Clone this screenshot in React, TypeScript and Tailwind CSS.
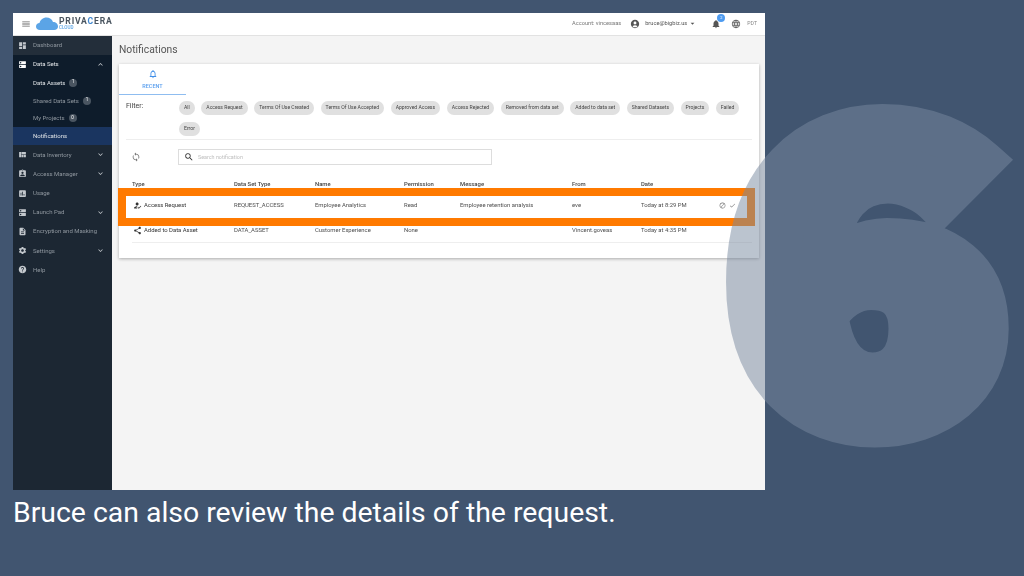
import React from "react";
import {
  MdAccountCircle, MdArrowDropDown, MdAssessment, MdAssignmentInd, MdBlock, MdCheck, MdDashboard, MdDescription, MdDns,
  MdExpandLess, MdExpandMore, MdHelp, MdHowToReg, MdLanguage, MdMenu, MdNotifications, MdNotificationsNone, MdSearch,
  MdSettings, MdShare, MdSync, MdViewQuilt,
} from "react-icons/md";

const chips = ["All", "Access Request", "Terms Of Use Created", "Terms Of Use Accepted", "Approved Access", "Access Rejected", "Removed from data set", "Added to data set", "Shared Datasets", "Projects", "Failed", "Error"];

function NavRow({ icon: Icon, label, chevron, dim = true, bg = "" }: { icon: any; label: string; chevron?: "up" | "down"; dim?: boolean; bg?: string }) {
  return (
    <div className={`flex h-[19.2px] items-center pl-[5px] pr-[7px] ${bg}`}>
      <Icon className={`w-[9px] h-[9px] ${dim ? "text-[#c3c8cd]" : "text-white"}`} />
      <span className={`ml-[6px] flex-1 pb-[1px] text-[6px] ${dim ? "text-[#8f979f]" : "text-[#e4e7ea]"}`}>{label}</span>
      {chevron === "up" && <MdExpandLess className="w-[9px] h-[9px] text-[#c3c8cd]" />}
      {chevron === "down" && <MdExpandMore className="w-[9px] h-[9px] text-[#c3c8cd]" />}
    </div>
  );
}

function SubRow({ label, count, active, bright }: { label: string; count?: string; active?: boolean; bright?: boolean }) {
  return (
    <div className={`flex h-[17.8px] items-center pl-[20px] ${active ? "bg-[#1a3560]" : ""}`}>
      <span className={`pb-[1px] text-[6px] ${bright ? "text-[#dfe3e7]" : "text-[#8f979f]"}`}>{label}</span>
      {count && <span className="ml-[4px] flex h-[8px] w-[8px] items-center justify-center rounded-full bg-[#4a5561] text-[4.5px] text-white">{count}</span>}
    </div>
  );
}

function Row({ icon, type, dst, name, perm, msg, from, date, actions, h }: any) {
  return (
    <div className={`grid grid-cols-[102px_81px_89px_56px_112px_69px_77px_1fr] items-center border-b border-[#eeeeee] text-[5.9px] text-[#4d4d4d] ${h}`}>
      <div className="flex items-center pl-[1px] text-[#333333]">
        {icon}
        <span className="ml-[2px]">{type}</span>
      </div>
      <span>{dst}</span>
      <span>{name}</span>
      <span>{perm}</span>
      <span>{msg}</span>
      <span>{from}</span>
      <span>{date}</span>
      <span className="flex items-center gap-[3px] pl-[1px] text-[#777777]">{actions}</span>
    </div>
  );
}

export default function App() {
  return (
    <div className="relative h-[576px] w-[1024px] overflow-hidden bg-[#415570] pl-[13px] pt-[13px] font-['Roboto',sans-serif]">
      <div className="flex h-[477px] w-[752px] flex-col overflow-hidden bg-[#f4f4f4] blur-[0.4px]">
        <header className="flex h-[22.5px] shrink-0 items-center border-b border-[#e2e2e2] bg-white">
          <MdMenu className="ml-[8px] h-[10px] w-[10px] text-[#666666]" />
          <svg viewBox="0 0 44 26" className="ml-[5px] h-[13px] w-[22px]">
            <path d="M8 26C3 26 0 23 0 19c0-4 3-7 7-7 1-6 7-11 14-11 6 0 11 3 13 9 6 0 10 4 10 9 0 4-3 7-8 7Z" fill="#5ba4e6" />
          </svg>
          <div className="ml-[1px] flex flex-col leading-none">
            <span className="text-[8.6px] font-bold tracking-[0.8px] text-[#4a5560]">PRIVA<span className="text-[#3f87d0]">C</span>ERA</span>
            <span className="mt-[1px] text-[4.6px] font-medium text-[#5ba4e6]">CLOUD</span>
          </div>
          <div className="flex-1" />
          <span className="text-[5.7px] text-[#777777]">Account: vincesaas</span>
          <MdAccountCircle className="ml-[9px] h-[10px] w-[10px] text-[#555555]" />
          <span className="ml-[5px] text-[5.7px] text-[#555555]">bruce@bigbiz.us</span>
          <MdArrowDropDown className="ml-[1px] h-[9px] w-[9px] text-[#555555]" />
          <div className="relative ml-[14px]">
            <MdNotifications className="h-[10px] w-[10px] text-[#555555]" />
            <span className="absolute -right-[4px] -top-[5px] flex h-[8px] w-[8px] items-center justify-center rounded-full bg-[#4e9bf0] text-[4px] text-white">2</span>
          </div>
          <MdLanguage className="ml-[10px] h-[10px] w-[10px] text-[#666666]" />
          <span className="ml-[6px] mr-[8px] text-[5.2px] text-[#888888]">PDT</span>
        </header>
        <div className="flex min-h-0 flex-1">
          <aside className="w-[99px] shrink-0 bg-[#1c2733]">
            <NavRow icon={MdDashboard} label="Dashboard" bg="bg-[#232e3a]" />
            <div className="bg-[#0e1c2b]">
              <NavRow icon={MdDns} label="Data Sets" chevron="up" dim={false} />
              <SubRow label="Data Assets" count="1" bright />
              <SubRow label="Shared Data Sets" count="1" />
              <SubRow label="My Projects" count="0" />
              <SubRow label="Notifications" active bright />
            </div>
            <NavRow icon={MdViewQuilt} label="Data Inventory" chevron="down" />
            <NavRow icon={MdAssignmentInd} label="Access Manager" chevron="down" />
            <NavRow icon={MdAssessment} label="Usage" />
            <NavRow icon={MdDns} label="Launch Pad" chevron="down" />
            <NavRow icon={MdDescription} label="Encryption and Masking" />
            <NavRow icon={MdSettings} label="Settings" chevron="down" />
            <NavRow icon={MdHelp} label="Help" />
          </aside>
          <main className="min-w-0 flex-1 pl-[7px] pr-[6px]">
            <h1 className="mt-[7.5px] h-[21px] text-[10.3px] leading-[14px] text-[#555555]">Notifications</h1>
            <div className="h-[194px] bg-white shadow-[0_1px_3px_rgba(0,0,0,0.3)]">
              <div className="flex h-[31px] w-[67px] flex-col items-center justify-end border-b border-[#8fbdf0] pb-[4px]">
                <MdNotificationsNone className="h-[10px] w-[10px] text-[#3f8ee8]" />
                <span className="mt-[4px] text-[5.5px] font-medium leading-[7px] text-[#5a9fee]">RECENT</span>
              </div>
              <div className="mx-[7px] flex border-b border-[#eeeeee] pb-[3px] pt-[6px]">
                <span className="w-[53px] shrink-0 pt-[1px] text-[7px] leading-[8px] text-[#444444]">Filter:</span>
                <div className="flex flex-wrap gap-x-[6.55px] gap-y-[7px]">
                  {chips.map((c) => (
                    <span key={c} className="flex h-[14px] items-center rounded-full bg-[#e0e0e0] px-[5px] text-[5.1px] text-[#444444]">{c}</span>
                  ))}
                </div>
              </div>
              <div className="mx-[7px] flex h-[39.5px] items-start pt-[9px]">
                <MdSync className="ml-[5px] mt-[3px] h-[10px] w-[10px] text-[#777777]" />
                <div className="ml-[37px] flex h-[16px] w-[314px] items-center border border-[#dddddd] pl-[5px]">
                  <MdSearch className="h-[10px] w-[10px] text-[#333333]" />
                  <span className="ml-[4px] text-[5.4px] text-[#bdbdbd]">Search notification</span>
                </div>
              </div>
              <div className="mx-[7px] pl-[6px]">
                <div className="grid h-[7px] grid-cols-[102px_81px_89px_56px_112px_69px_77px_1fr] items-center text-[5.9px] font-medium text-[#444444]">
                  <span>Type</span><span>Data Set Type</span><span>Name</span><span>Permission</span><span>Message</span><span>From</span><span>Date</span><span />
                </div>
              </div>
              <div className="mx-[7px] pl-[6px] pt-[7px]">
                <Row h="h-[25.5px]" icon={<MdHowToReg className="h-[9px] w-[9px] text-[#333333]" />} type="Access Request" dst="REQUEST_ACCESS" name="Employee Analytics" perm="Read" msg="Employee retention analysis" from="eve" date="Today at 8:29 PM"
                  actions={<><MdBlock className="h-[7px] w-[7px]" /><MdCheck className="h-[7px] w-[7px]" /></>} />
                <Row h="h-[23.5px]" icon={<MdShare className="h-[9px] w-[9px] text-[#333333]" />} type="Added to Data Asset" dst="DATA_ASSET" name="Customer Experience" perm="None" msg="" from="Vincent.goveas" date="Today at 4:35 PM" />
              </div>
            </div>
          </main>
        </div>
      </div>
      <p className="mt-[5px] text-[28.4px] leading-[36px] font-normal text-white">Bruce can also review the details of the request.</p>
      <div className="absolute left-[118px] top-[188px] h-[38px] w-[637px] border-[8px] border-[#ff7a00]" />
      <span className="pointer-events-none absolute left-[729px] top-[0px] origin-left scale-x-[1.125] font-['Noto_Sans_CJK_JP',sans-serif] text-[400px] leading-[493px] font-black text-[#7a8aa0] opacity-50 [-webkit-text-stroke:42px_#7a8aa0]">6</span>
    </div>
  );
}
